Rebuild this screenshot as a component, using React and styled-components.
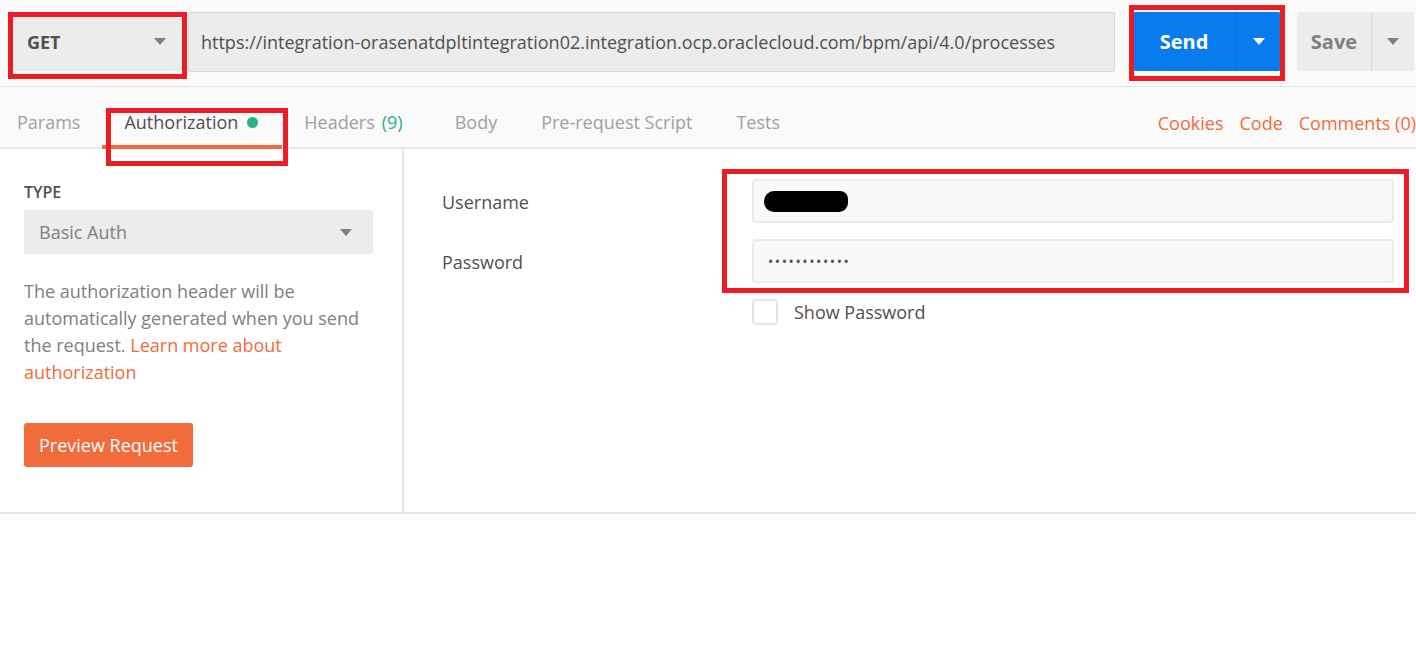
import React from "react";
import styled, { createGlobalStyle } from "styled-components";

const GlobalStyle = createGlobalStyle`
  html, body {
    margin: 0;
    padding: 0;
    background: #fff;
    font-family: "Open Sans", "Liberation Sans", sans-serif;
    overflow: hidden;
  }
`;

const Page = styled.div`
  position: relative;
  width: 1416px;
  height: 648px;
  background: #fff;
  overflow: hidden;
`;

const TopBar = styled.div`
  display: flex;
  align-items: flex-start;
  height: 87px;
  padding: 12px 0 0 12px;
  box-sizing: border-box;
  background: #fafafa;
  border-bottom: 1px solid #e6e6e6;
  white-space: nowrap;
`;

const MethodSelect = styled.div`
  display: flex;
  align-items: center;
  justify-content: space-between;
  width: 170px;
  height: 59px;
  padding: 0 16px 0 15px;
  box-sizing: border-box;
  background: #ececec;
  border-radius: 3px;
  font-size: 18px;
  font-weight: 700;
  color: #505050;
  flex-shrink: 0;
`;

const Caret = styled.span`
  width: 0;
  height: 0;
  border-left: 6px solid transparent;
  border-right: 6px solid transparent;
  border-top: 7px solid ${(p) => p.color || "#808080"};
`;

const UrlInput = styled.div`
  display: flex;
  align-items: center;
  width: 927px;
  height: 60px;
  margin-left: 6px;
  padding-left: 12px;
  box-sizing: border-box;
  background: #ececec;
  border: 1px solid #d6d6d6;
  border-radius: 2px;
  font-size: 18px;
  color: #505050;
  flex-shrink: 0;
`;

const SplitButton = styled.div`
  display: flex;
  height: 59px;
  margin-left: ${(p) => p.gap}px;
  background: ${(p) => (p.primary ? "#097bed" : "#ececec")};
  border-radius: 3px;
  flex-shrink: 0;
  overflow: hidden;
`;

const ButtonMain = styled.div`
  display: flex;
  align-items: center;
  justify-content: center;
  width: ${(p) => p.width}px;
  font-size: 20px;
  font-weight: 700;
  color: ${(p) => (p.primary ? "#fff" : "#808080")};
  border-right: 1px solid ${(p) => (p.primary ? "#0a6fd4" : "#d8d8d8")};
`;

const ButtonCaret = styled.div`
  display: flex;
  align-items: center;
  justify-content: center;
  width: ${(p) => p.width}px;
`;

const TabBar = styled.div`
  display: flex;
  align-items: stretch;
  justify-content: space-between;
  height: 62px;
  box-sizing: border-box;
  background: #fafafa;
  border-bottom: 2px solid #e6e6e6;
  white-space: nowrap;
`;

const Tabs = styled.div`
  display: flex;
  align-items: stretch;
`;

const Tab = styled.div`
  display: flex;
  align-items: center;
  padding: 12px 22px 0;
  font-size: 18px;
  color: ${(p) => (p.active ? "#505050" : "#a0a0a0")};
  border-bottom: 4px solid ${(p) => (p.active ? "#f26b3a" : "transparent")};
  margin-bottom: -2px;

  &:first-child {
    padding-left: 17px;
  }
`;

const Count = styled.span`
  color: #26b47f;
  margin: 0 8px 0 7px;
`;

const Dot = styled.span`
  width: 11px;
  height: 11px;
  border-radius: 50%;
  background: #26b47f;
  margin: 0 2px 0 9px;
`;

const Links = styled.div`
  display: flex;
  align-items: center;
  gap: 16px;
  padding-top: 11px;
`;

const Link = styled.span`
  font-size: 18px;
  color: #f26b3a;
`;

const Content = styled.div`
  display: flex;
  border-bottom: 2px solid #e6e6e6;
`;

const LeftPanel = styled.div`
  width: 404px;
  padding: 33px 30px 45px 24px;
  box-sizing: border-box;
  border-right: 2px solid #e6e6e6;
  flex-shrink: 0;
`;

const TypeLabel = styled.div`
  font-size: 16px;
  font-weight: 600;
  color: #505050;
  line-height: 20px;
  margin-bottom: 8px;
`;

const TypeSelect = styled.div`
  display: flex;
  align-items: center;
  justify-content: space-between;
  width: 349px;
  height: 44px;
  padding: 0 21px 0 15px;
  box-sizing: border-box;
  background: #ececec;
  border-radius: 3px;
  font-size: 18px;
  color: #808080;
`;

const Description = styled.p`
  margin: 24px 0 37px;
  font-size: 18px;
  line-height: 27px;
  color: #808080;
`;

const Accent = styled.span`
  color: #f26b3a;
`;

const PreviewButton = styled.div`
  display: inline-flex;
  align-items: center;
  height: 44px;
  padding: 0 15px;
  background: #f26b3a;
  border-radius: 3px;
  font-size: 18px;
  color: #fff;
`;

const RightPanel = styled.div`
  flex: 1;
  padding: 30px 22px 0 38px;
`;

const FieldRow = styled.div`
  display: flex;
  align-items: center;
  margin-bottom: 16px;
`;

const FieldLabel = styled.div`
  width: 310px;
  padding-top: 2px;
  font-size: 18px;
  color: #505050;
  flex-shrink: 0;
`;

const Field = styled.div`
  flex: 1;
  display: flex;
  align-items: center;
  height: 44px;
  padding: 0 14px;
  box-sizing: border-box;
  background: #f9f9f9;
  border: 2px solid #ebebeb;
  border-radius: 4px;
  font-size: 18px;
  color: #505050;
`;

const Redaction = styled.span`
  display: block;
  width: 84px;
  height: 21px;
  margin-left: -4px;
  background: #000;
  border-radius: 10px 8px 9px 10px;
`;

const Dots = styled.span`
  font-size: 14px;
  letter-spacing: 1.6px;
`;

const CheckRow = styled.div`
  display: flex;
  align-items: center;
  margin-left: 310px;
`;

const Checkbox = styled.span`
  width: 26px;
  height: 26px;
  box-sizing: border-box;
  border: 2px solid #e6e6e6;
  border-radius: 4px;
  background: #fff;
  margin-right: 16px;
`;

const CheckLabel = styled.span`
  font-size: 18px;
  color: #505050;
`;

const Highlight = styled.div`
  position: absolute;
  left: ${(p) => p.x}px;
  top: ${(p) => p.y}px;
  width: ${(p) => p.w}px;
  height: ${(p) => p.h}px;
  box-sizing: border-box;
  border: ${(p) => p.t || 5}px solid #ed1c24;
  pointer-events: none;
`;

export default function App() {
  return (
    <Page>
      <GlobalStyle />
      <TopBar>
        <MethodSelect>
          GET
          <Caret />
        </MethodSelect>
        <UrlInput>
          https://integration-orasenatdpltintegration02.integration.ocp.oraclecloud.com/bpm/api/4.0/processes
        </UrlInput>
        <SplitButton primary gap={18}>
          <ButtonMain primary width={102}>Send</ButtonMain>
          <ButtonCaret width={45}>
            <Caret color="#fff" />
          </ButtonCaret>
        </SplitButton>
        <SplitButton gap={16}>
          <ButtonMain width={74}>Save</ButtonMain>
          <ButtonCaret width={42}>
            <Caret />
          </ButtonCaret>
        </SplitButton>
      </TopBar>

      <TabBar>
        <Tabs>
          <Tab>Params</Tab>
          <Tab active>
            Authorization
            <Dot />
          </Tab>
          <Tab>
            Headers<Count>(9)</Count>
          </Tab>
          <Tab>Body</Tab>
          <Tab>Pre-request Script</Tab>
          <Tab>Tests</Tab>
        </Tabs>
        <Links>
          <Link>Cookies</Link>
          <Link>Code</Link>
          <Link>Comments (0)</Link>
        </Links>
      </TabBar>

      <Content>
        <LeftPanel>
          <TypeLabel>TYPE</TypeLabel>
          <TypeSelect>
            Basic Auth
            <Caret />
          </TypeSelect>
          <Description>
            The authorization header will be automatically generated when you
            send the request. <Accent>Learn more about authorization</Accent>
          </Description>
          <PreviewButton>Preview Request</PreviewButton>
        </LeftPanel>
        <RightPanel>
          <FieldRow>
            <FieldLabel>Username</FieldLabel>
            <Field>
              <Redaction />
            </Field>
          </FieldRow>
          <FieldRow>
            <FieldLabel>Password</FieldLabel>
            <Field>
              <Dots>••••••••••••</Dots>
            </Field>
          </FieldRow>
          <CheckRow>
            <Checkbox />
            <CheckLabel>Show Password</CheckLabel>
          </CheckRow>
        </RightPanel>
      </Content>

      <Highlight x={8} y={12} w={179} h={67} />
      <Highlight x={1129} y={5} w={156} h={76} />
      <Highlight x={106} y={108} w={182} h={58} />
      <Highlight x={722} y={169} w={687} h={124} />
    </Page>
  );
}
